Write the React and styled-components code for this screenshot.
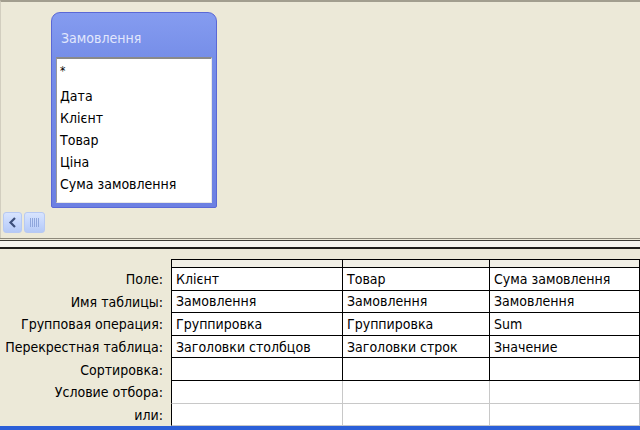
import React from 'react';
import styled, { createGlobalStyle } from 'styled-components';

const GlobalStyle = createGlobalStyle`
  html, body {
    margin: 0;
    padding: 0;
    background: #ece9d8;
  }
  body {
    width: 640px;
    height: 430px;
    overflow: hidden;
    font-family: 'DejaVu Sans Condensed', 'DejaVu Sans', sans-serif;
    font-size: 14px;
    color: #000;
  }
`;

const Screen = styled.div`
  display: flex;
  flex-direction: column;
  width: 640px;
  height: 430px;
  overflow: hidden;
`;

const TopPane = styled.div`
  display: flex;
  flex-direction: column;
  height: 238px;
  border-top: 2px solid #a29e8f;
  border-left: 1px solid #d2cebf;
  box-sizing: border-box;
  padding-top: 10px;
`;

const Canvas = styled.div`
  height: 198px;
  padding-left: 50px;
`;

const TableWindow = styled.div`
  width: 166px;
  height: 196px;
  box-sizing: border-box;
  display: flex;
  flex-direction: column;
  border: 1px solid #5a68d6;
  border-radius: 9px 9px 2px 2px;
  background: linear-gradient(180deg, #859cf0 0%, #758de8 25%, #6c80e2 100%);
  padding: 0 4px 4px 4px;
`;

const TitleBar = styled.div`
  height: 44px;
  display: flex;
  align-items: center;
  padding-left: 5px;
  padding-top: 5px;
  box-sizing: border-box;
  color: #e2e7fc;
  font-size: 14px;
`;

const FieldList = styled.div`
  flex: 1;
  background: #fff;
  border-top: 2px solid #8a8a8a;
  border-left: 1px solid #9a9a9a;
  border-right: 1px solid #e8e8e8;
  border-bottom: 1px solid #e8e8e8;
  padding: 4px 0 0 3px;
  display: flex;
  flex-direction: column;
`;

const FieldItem = styled.div`
  height: 22px;
  line-height: ${(p) => (p.$star ? '16px' : '22px')};
  white-space: nowrap;
  font-size: ${(p) => (p.$star ? '12px' : '14px')};
`;

const ScrollRow = styled.div`
  height: 21px;
  display: flex;
  align-items: stretch;
  gap: 2px;
  padding-left: 2px;
  margin-top: 2px;
`;

const ScrollButton = styled.div`
  width: ${(p) => (p.$wide ? '21px' : '19px')};
  box-sizing: border-box;
  border: 1px solid #b7c9f3;
  border-radius: 3px;
  background: linear-gradient(180deg, #d8e4fe 0%, #c2d4fc 60%, #b5c9f6 100%);
  display: flex;
  align-items: center;
  justify-content: center;
`;

const Splitter = styled.div`
  height: 11px;
  box-sizing: border-box;
  border-top: 1px solid #8d897b;
  border-bottom: 2px solid #1f1e1a;
  background: linear-gradient(180deg, #ece9d8 0px, #ece9d8 1px, #3a3933 1px, #3a3933 2px, #f6f5ee 2px);
`;

const LowerPane = styled.div`
  flex: 1;
  padding-top: 10px;
  overflow: hidden;
`;

const QueryGrid = styled.div`
  display: grid;
  grid-template-columns: 171px 172px 147px 1fr;
  grid-template-rows: 9px repeat(7, 22.6px);
`;

const RowLabel = styled.div`
  display: flex;
  align-items: center;
  justify-content: flex-end;
  padding-right: 8px;
  white-space: nowrap;
`;

const HeaderCell = styled.div`
  box-sizing: border-box;
  background: #f1efe6;
  border-top: 1px solid #000;
  border-bottom: 1px solid #000;
  border-right: 1px solid #000;
  ${(p) => p.$first && 'border-left: 1px solid #000;'}
`;

const Cell = styled.div`
  box-sizing: border-box;
  background: #fff;
  display: flex;
  align-items: center;
  padding-left: 4px;
  white-space: nowrap;
  overflow: hidden;
  border-right: 1px solid ${(p) => (p.$soft ? '#c8c8c8' : '#000')};
  border-bottom: 1px solid ${(p) => (p.$soft ? '#c8c8c8' : '#000')};
  ${(p) => p.$first && 'border-left: 1px solid #000;'}
`;

const StatusStrip = styled.div`
  height: 4px;
  background: #2b5fd8;
`;

const fields = ['Дата', 'Клієнт', 'Товар', 'Ціна', 'Сума замовлення'];

const rows = [
  { label: 'Поле:', cells: ['Клієнт', 'Товар', 'Сума замовлення'] },
  { label: 'Имя таблицы:', cells: ['Замовлення', 'Замовлення', 'Замовлення'] },
  { label: 'Групповая операция:', cells: ['Группировка', 'Группировка', 'Sum'] },
  { label: 'Перекрестная таблица:', cells: ['Заголовки столбцов', 'Заголовки строк', 'Значение'] },
  { label: 'Сортировка:', cells: ['', '', ''] },
  { label: 'Условие отбора:', cells: ['', '', ''], soft: true },
  { label: 'или:', cells: ['', '', ''], soft: true },
];

const ChevronLeft = () => (
  <svg width="9" height="11" viewBox="0 0 9 11">
    <path d="M7 1 L2.5 5.5 L7 10" fill="none" stroke="#3d4f7a" strokeWidth="2.2" />
  </svg>
);

const Grip = () => (
  <svg width="9" height="9" viewBox="0 0 9 9">
    {[0.5, 2.5, 4.5, 6.5, 8.5].map((x) => (
      <line key={x} x1={x} y1="0" x2={x} y2="9" stroke="#8fa6dc" strokeWidth="1" />
    ))}
  </svg>
);

export default function App() {
  return (
    <Screen>
      <GlobalStyle />
      <TopPane>
        <Canvas>
          <TableWindow>
            <TitleBar>Замовлення</TitleBar>
            <FieldList>
              <FieldItem $star>*</FieldItem>
              {fields.map((f) => (
                <FieldItem key={f}>{f}</FieldItem>
              ))}
            </FieldList>
          </TableWindow>
        </Canvas>
        <ScrollRow>
          <ScrollButton>
            <ChevronLeft />
          </ScrollButton>
          <ScrollButton $wide>
            <Grip />
          </ScrollButton>
        </ScrollRow>
      </TopPane>
      <Splitter />
      <LowerPane>
        <QueryGrid>
          <div />
          <HeaderCell $first />
          <HeaderCell />
          <HeaderCell />
          {rows.map((r) => (
            <React.Fragment key={r.label}>
              <RowLabel>{r.label}</RowLabel>
              {r.cells.map((c, i) => (
                <Cell key={i} $first={i === 0} $soft={r.soft}>
                  {c}
                </Cell>
              ))}
            </React.Fragment>
          ))}
        </QueryGrid>
      </LowerPane>
      <StatusStrip />
    </Screen>
  );
}
